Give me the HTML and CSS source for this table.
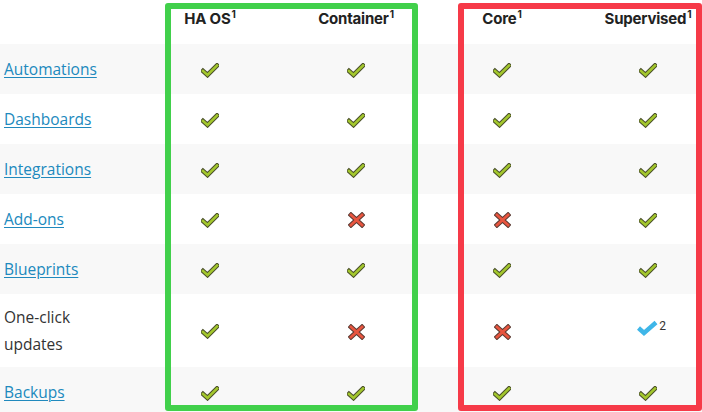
FILE: index.html
```html
<!DOCTYPE html>
<html lang="en">
<head>
<meta charset="utf-8">
<title>Installation comparison</title>
<link rel="stylesheet" href="styles.css">
</head>
<body>
<div class="wrap">
  <table class="cmp">
    <colgroup>
      <col class="c-label"><col class="c-val"><col class="c-val"><col class="c-val"><col class="c-val">
    </colgroup>
    <thead>
      <tr class="head">
        <th></th>
        <th>HA OS<sup>1</sup></th>
        <th>Container<sup>1</sup></th>
        <th>Core<sup>1</sup></th>
        <th>Supervised<sup>1</sup></th>
      </tr>
    </thead>
    <tbody>
      <tr class="alt">
        <td class="label"><a href="#">Automations</a></td>
        <td><svg class="ok" viewBox="0 0 18 15"><polyline points="2,8 6.5,12 16,2.5"/><polyline class="in" points="2,8 6.5,12 16,2.5"/></svg></td>
        <td><svg class="ok" viewBox="0 0 18 15"><polyline points="2,8 6.5,12 16,2.5"/><polyline class="in" points="2,8 6.5,12 16,2.5"/></svg></td>
        <td><svg class="ok" viewBox="0 0 18 15"><polyline points="2,8 6.5,12 16,2.5"/><polyline class="in" points="2,8 6.5,12 16,2.5"/></svg></td>
        <td><svg class="ok" viewBox="0 0 18 15"><polyline points="2,8 6.5,12 16,2.5"/><polyline class="in" points="2,8 6.5,12 16,2.5"/></svg></td>
      </tr>
      <tr>
        <td class="label"><a href="#">Dashboards</a></td>
        <td><svg class="ok" viewBox="0 0 18 15"><polyline points="2,8 6.5,12 16,2.5"/><polyline class="in" points="2,8 6.5,12 16,2.5"/></svg></td>
        <td><svg class="ok" viewBox="0 0 18 15"><polyline points="2,8 6.5,12 16,2.5"/><polyline class="in" points="2,8 6.5,12 16,2.5"/></svg></td>
        <td><svg class="ok" viewBox="0 0 18 15"><polyline points="2,8 6.5,12 16,2.5"/><polyline class="in" points="2,8 6.5,12 16,2.5"/></svg></td>
        <td><svg class="ok" viewBox="0 0 18 15"><polyline points="2,8 6.5,12 16,2.5"/><polyline class="in" points="2,8 6.5,12 16,2.5"/></svg></td>
      </tr>
      <tr class="alt">
        <td class="label"><a href="#">Integrations</a></td>
        <td><svg class="ok" viewBox="0 0 18 15"><polyline points="2,8 6.5,12 16,2.5"/><polyline class="in" points="2,8 6.5,12 16,2.5"/></svg></td>
        <td><svg class="ok" viewBox="0 0 18 15"><polyline points="2,8 6.5,12 16,2.5"/><polyline class="in" points="2,8 6.5,12 16,2.5"/></svg></td>
        <td><svg class="ok" viewBox="0 0 18 15"><polyline points="2,8 6.5,12 16,2.5"/><polyline class="in" points="2,8 6.5,12 16,2.5"/></svg></td>
        <td><svg class="ok" viewBox="0 0 18 15"><polyline points="2,8 6.5,12 16,2.5"/><polyline class="in" points="2,8 6.5,12 16,2.5"/></svg></td>
      </tr>
      <tr>
        <td class="label"><a href="#">Add-ons</a></td>
        <td><svg class="ok" viewBox="0 0 18 15"><polyline points="2,8 6.5,12 16,2.5"/><polyline class="in" points="2,8 6.5,12 16,2.5"/></svg></td>
        <td><svg class="no" viewBox="0 0 17 16"><path d="M3,3 L14,13 M14,3 L3,13"/><path class="in" d="M3,3 L14,13 M14,3 L3,13"/></svg></td>
        <td><svg class="no" viewBox="0 0 17 16"><path d="M3,3 L14,13 M14,3 L3,13"/><path class="in" d="M3,3 L14,13 M14,3 L3,13"/></svg></td>
        <td><svg class="ok" viewBox="0 0 18 15"><polyline points="2,8 6.5,12 16,2.5"/><polyline class="in" points="2,8 6.5,12 16,2.5"/></svg></td>
      </tr>
      <tr class="alt">
        <td class="label"><a href="#">Blueprints</a></td>
        <td><svg class="ok" viewBox="0 0 18 15"><polyline points="2,8 6.5,12 16,2.5"/><polyline class="in" points="2,8 6.5,12 16,2.5"/></svg></td>
        <td><svg class="ok" viewBox="0 0 18 15"><polyline points="2,8 6.5,12 16,2.5"/><polyline class="in" points="2,8 6.5,12 16,2.5"/></svg></td>
        <td><svg class="ok" viewBox="0 0 18 15"><polyline points="2,8 6.5,12 16,2.5"/><polyline class="in" points="2,8 6.5,12 16,2.5"/></svg></td>
        <td><svg class="ok" viewBox="0 0 18 15"><polyline points="2,8 6.5,12 16,2.5"/><polyline class="in" points="2,8 6.5,12 16,2.5"/></svg></td>
      </tr>
      <tr>
        <td class="label plain">One-click<br>updates</td>
        <td><svg class="ok" viewBox="0 0 18 15"><polyline points="2,8 6.5,12 16,2.5"/><polyline class="in" points="2,8 6.5,12 16,2.5"/></svg></td>
        <td><svg class="no" viewBox="0 0 17 16"><path d="M3,3 L14,13 M14,3 L3,13"/><path class="in" d="M3,3 L14,13 M14,3 L3,13"/></svg></td>
        <td><svg class="no" viewBox="0 0 17 16"><path d="M3,3 L14,13 M14,3 L3,13"/><path class="in" d="M3,3 L14,13 M14,3 L3,13"/></svg></td>
        <td><span class="partial"><svg class="blue" viewBox="0 0 22 17"><polyline points="2.5,9 8,14 20,3.5"/></svg><span class="note">2</span></span></td>
      </tr>
      <tr class="alt">
        <td class="label"><a href="#">Backups</a></td>
        <td><svg class="ok" viewBox="0 0 18 15"><polyline points="2,8 6.5,12 16,2.5"/><polyline class="in" points="2,8 6.5,12 16,2.5"/></svg></td>
        <td><svg class="ok" viewBox="0 0 18 15"><polyline points="2,8 6.5,12 16,2.5"/><polyline class="in" points="2,8 6.5,12 16,2.5"/></svg></td>
        <td><svg class="ok" viewBox="0 0 18 15"><polyline points="2,8 6.5,12 16,2.5"/><polyline class="in" points="2,8 6.5,12 16,2.5"/></svg></td>
        <td><svg class="ok" viewBox="0 0 18 15"><polyline points="2,8 6.5,12 16,2.5"/><polyline class="in" points="2,8 6.5,12 16,2.5"/></svg></td>
      </tr>
    </tbody>
  </table>
  <div class="box box-green"></div>
  <div class="box box-red"></div>
</div>
</body>
</html>
```
FILE: styles.css
```css
html, body {
  margin: 0;
  padding: 0;
  background: #fff;
  overflow: hidden;
}
body {
  width: 702px;
  height: 412px;
  font-family: "Open Sans", "Liberation Sans", sans-serif;
  color: #333;
}
.wrap {
  position: relative;
  width: 702px;
  height: 412px;
}
.cmp {
  width: 721px;
  table-layout: fixed;
  border-collapse: collapse;
  border-spacing: 0;
}
.c-label { width: 137px; }
.c-val { width: 146px; }

.head th {
  height: 44px;
  padding: 9px 0 0;
  box-sizing: border-box;
  vertical-align: top;
  font-family: Inter, "Liberation Sans", sans-serif;
  font-weight: 700;
  font-size: 15px;
  line-height: 20px;
  letter-spacing: -0.2px;
  color: #222;
  text-align: center;
}
.head sup {
  font-size: 10px;
  line-height: 0;
  vertical-align: 6px;
  margin-left: 1px;
}

tbody tr { height: 50px; }
tbody tr.alt { background: #f8f8f8; }
tbody td {
  padding: 10px 0;
  text-align: center;
  vertical-align: middle;
  line-height: 26.5px;
}
td.label {
  text-align: left;
  padding-left: 4px;
  font-size: 15.5px;
}
td.label a {
  color: #2089bd;
  text-decoration: underline;
  text-underline-offset: 2px;
  text-decoration-thickness: 1px;
}
td.plain { color: #333; }

svg { display: inline-block; vertical-align: middle; }

.ok { width: 18px; height: 15px; }
.ok polyline {
  fill: none;
  stroke: #4a4f2a;
  stroke-width: 4.6;
  stroke-linecap: square;
  stroke-linejoin: miter;
}
.ok polyline.in {
  stroke: #a3c72d;
  stroke-width: 2.6;
}

.no { width: 17px; height: 16px; }
.no path {
  fill: none;
  stroke: #5a3a32;
  stroke-width: 4.8;
  stroke-linecap: square;
}
.no path.in {
  stroke: #e8553f;
  stroke-width: 2.8;
}

.partial {
  display: inline-flex;
  align-items: center;
  margin-left: 6px;
}
.blue { width: 22px; height: 17px; }
.blue polyline {
  fill: none;
  stroke: #3fb6e8;
  stroke-width: 4.4;
  stroke-linecap: butt;
  stroke-linejoin: miter;
}
.note {
  font-family: Roboto, "Liberation Sans", sans-serif;
  font-size: 12px;
  line-height: 12px;
  color: #333;
  margin-left: 1px;
  margin-top: -4px;
}

.box {
  position: absolute;
  top: 3px;
  height: 408px;
  box-sizing: border-box;
  border: 6px solid;
  border-radius: 3px;
  pointer-events: none;
}
.box-green {
  left: 165px;
  width: 253px;
  border-color: #41d04b;
}
.box-red {
  left: 458px;
  width: 244px;
  border-color: #f63a48;
}
```
